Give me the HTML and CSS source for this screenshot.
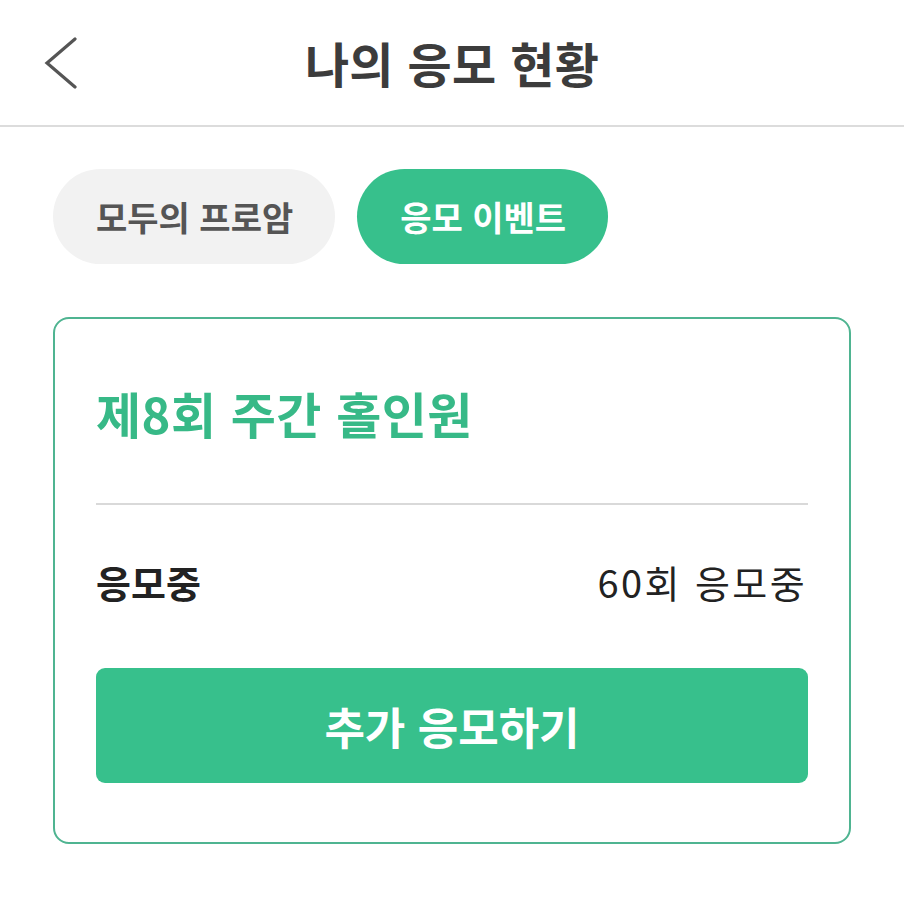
FILE: index.html
```html
<!DOCTYPE html>
<html lang="ko">
<head>
<meta charset="utf-8">
<link rel="stylesheet" href="styles.css">
</head>
<body>
<header class="topbar">
  <button class="back" aria-label="뒤로">
    <svg width="34" height="52" viewBox="0 0 34 52"><path d="M31 2 L3 26 L31 50" fill="none" stroke="#555" stroke-width="3.2" stroke-linecap="round" stroke-linejoin="miter"/></svg>
  </button>
  <h1 class="title">나의 응모 현황</h1>
</header>
<nav class="tabs">
  <span class="tab">모두의 프로암</span>
  <span class="tab active">응모 이벤트</span>
</nav>
<section class="card">
  <h2 class="card-title">제8회 주간 홀인원</h2>
  <hr class="divider">
  <div class="row">
    <span class="label">응모중</span>
    <span class="value">60회 응모중</span>
  </div>
  <button class="cta">추가 응모하기</button>
</section>
</body>
</html>
```
FILE: styles.css
```css
* { box-sizing: border-box; }
html, body { margin: 0; padding: 0; background: #fff; }
body {
  width: 904px;
  font-family: "Noto Sans CJK KR", "Noto Sans", sans-serif;
  color: #222;
}
.topbar {
  position: relative;
  height: 127px;
  border-bottom: 2px solid #dcdcdc;
  display: flex;
  align-items: center;
  justify-content: center;
}
.back {
  position: absolute;
  left: 44px;
  top: 37px;
  padding: 0;
  border: 0;
  background: none;
  line-height: 0;
}
.title {
  margin: 0 0 2px 0;
  font-size: 48px;
  font-weight: 700;
  color: #3c3c3c;
  letter-spacing: 0.3px;
  line-height: 1;
}
.tabs {
  display: flex;
  gap: 22px;
  padding: 42px 53px 0;
}
.tab {
  height: 95px;
  border-radius: 48px;
  display: flex;
  align-items: center;
  padding: 0 42px 0 43px;
  background: #f2f2f2;
  color: #555;
  font-size: 34px;
  font-weight: 700;
  letter-spacing: 0;
}
.tab.active {
  background: #37c08c;
  color: #fff;
}
.card {
  margin: 53px 0 0 53px;
  width: 798px;
  height: 527px;
  border: 2px solid #4fb491;
  border-radius: 16px;
  padding: 0 41px;
}
.card-title {
  margin: 0;
  padding-top: 64px;
  height: 184px;
  font-size: 49px;
  font-weight: 700;
  color: #37b987;
  letter-spacing: 0.5px;
  line-height: 60px;
}
.divider {
  margin: 0;
  border: 0;
  border-top: 2px solid #d9d9d9;
}
.row {
  display: flex;
  justify-content: space-between;
  align-items: center;
  height: 163px;
  padding-bottom: 10px;
  font-size: 38px;
  color: #222;
}
.label { font-weight: 700; }
.value { font-weight: 400; padding-right: 3px; letter-spacing: 2.4px; margin-right: -2px; }
.cta {
  display: block;
  width: 100%;
  height: 115px;
  border: 0;
  border-radius: 9px;
  background: #37c08c;
  color: #fff;
  font-family: inherit;
  font-size: 44px;
  font-weight: 700;
  letter-spacing: 0;
}
```
